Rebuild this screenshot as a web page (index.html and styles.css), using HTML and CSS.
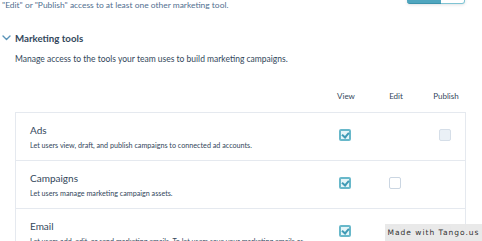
FILE: index.html
```html
<!DOCTYPE html>
<html lang="en">
<head>
    <meta charset="UTF-8">
    <meta name="viewport" content="width=device-width, initial-scale=1.0">
    <title>Marketing tools permissions</title>
    <link rel="stylesheet" href="styles.css">
</head>
<body>
    <div class="top-row">
        <p class="intro">"Edit" or "Publish" access to at least one other marketing tool.</p>
        <div class="toggle">
            <span class="toggle-on"></span>
            <span class="toggle-off"></span>
        </div>
    </div>

    <div class="section-head">
        <svg class="chevron" width="9" height="6" viewBox="0 0 9 6">
            <path d="M1 1 L4.5 4.5 L8 1" fill="none" stroke="#5a93b8" stroke-width="1.4" stroke-linecap="round" stroke-linejoin="round"/>
        </svg>
        <h2>Marketing tools</h2>
    </div>

    <p class="section-desc">Manage access to the tools your team uses to build marketing campaigns.</p>

    <div class="perm-grid perm-header">
        <span></span>
        <span>View</span>
        <span>Edit</span>
        <span>Publish</span>
    </div>

    <div class="perm-table">
        <div class="perm-grid perm-row">
            <div class="tool">
                <div class="tool-name">Ads</div>
                <div class="tool-desc">Let users view, draft, and publish campaigns to connected ad accounts.</div>
            </div>
            <span class="check checked"></span>
            <span></span>
            <span class="check disabled"></span>
        </div>
        <div class="perm-grid perm-row">
            <div class="tool">
                <div class="tool-name">Campaigns</div>
                <div class="tool-desc">Let users manage marketing campaign assets.</div>
            </div>
            <span class="check checked"></span>
            <span class="check"></span>
            <span></span>
        </div>
        <div class="perm-grid perm-row">
            <div class="tool">
                <div class="tool-name">Email</div>
                <div class="tool-desc">Let users add, edit, or send marketing emails. To let users save your marketing emails as</div>
            </div>
            <span class="check checked"></span>
            <span class="check"></span>
            <span class="check"></span>
        </div>
    </div>

    <div class="watermark">Made with Tango.us</div>
</body>
</html>
```

FILE: styles.css
```css
body {
    margin: 0;
    width: 482px;
    height: 241px;
    overflow: hidden;
    background: #fff;
    color: #33475b;
    font-family: Lato, "Open Sans", sans-serif;
}
.top-row {
    display: flex;
    justify-content: space-between;
    align-items: flex-start;
    padding: 0 17px 0 2px;
}
.intro {
    margin: 0;
    font-size: 8.45px;
    line-height: 11px;
    color: #516f90;
}
.toggle {
    display: flex;
    margin-top: -16px;
    height: 20px;
    width: 58px;
    box-shadow: 0 1px 3px rgba(45, 62, 80, 0.15);
    border-radius: 3px;
}
.toggle-on {
    flex: 0 0 34px;
    background: #4fa6bf;
    border-bottom: 1px solid #3b92ab;
    border-radius: 0 0 0 3px;
}
.toggle-off {
    flex: 1;
    background: #fff;
    border: 1px solid #7fc4d3;
    border-left: none;
    border-radius: 0 0 3px 0;
}
.section-head {
    display: flex;
    align-items: center;
    margin-top: 21px;
    padding-left: 2px;
}
.chevron {
    margin-right: 4px;
}
.section-head h2 {
    margin: 0;
    font-size: 9.7px;
    font-weight: bold;
    color: #33475b;
}
.section-desc {
    margin: 10px 0 0 15px;
    font-size: 8.5px;
    line-height: 11px;
    color: #33475b;
}
.perm-grid {
    display: grid;
    grid-template-columns: 1fr 40px 40px 40px;
    column-gap: 10px;
    align-items: center;
    justify-items: center;
}
.perm-grid > :first-child {
    justify-self: stretch;
}
.perm-header {
    margin: 26px 16px 0 15px;
    height: 10px;
    font-size: 8px;
    color: #33475b;
}
.perm-table {
    margin: 11px 16px 0 15px;
    border: 1px solid #e5e9ef;
    border-bottom: none;
}
.perm-row {
    height: 47px;
    border-bottom: 1px solid #e5e9ef;
    align-items: start;
}
.tool {
    padding: 11px 0 0 14px;
}
.tool-name {
    font-size: 10px;
    line-height: 13px;
    color: #33475b;
}
.tool-desc {
    margin-top: 4px;
    font-size: 7.2px;
    line-height: 9px;
    color: #33475b;
    white-space: nowrap;
}
.check {
    box-sizing: border-box;
    width: 12px;
    height: 12px;
    margin-top: 16px;
    border: 1px solid #cbd6e2;
    border-radius: 2px;
    background: #fff;
}
.check.checked {
    border: 2px solid #68b8ca;
    background: #e5f5f8;
    position: relative;
}
.check.checked::after {
    content: "";
    position: absolute;
    left: 2px;
    top: 0;
    width: 3px;
    height: 5px;
    border: solid #3f9ab5;
    border-width: 0 2px 2px 0;
    transform: rotate(40deg);
}
.check.disabled {
    background: #eaf0f6;
    border-color: #d5dee8;
}
.watermark {
    position: absolute;
    right: 0;
    bottom: 0;
    width: 97px;
    height: 17px;
    line-height: 17px;
    text-align: center;
    background: rgba(232, 232, 232, 0.95);
    color: #333;
    font-family: "DejaVu Sans", sans-serif;
    font-size: 7.5px;
    letter-spacing: 1px;
}
```
